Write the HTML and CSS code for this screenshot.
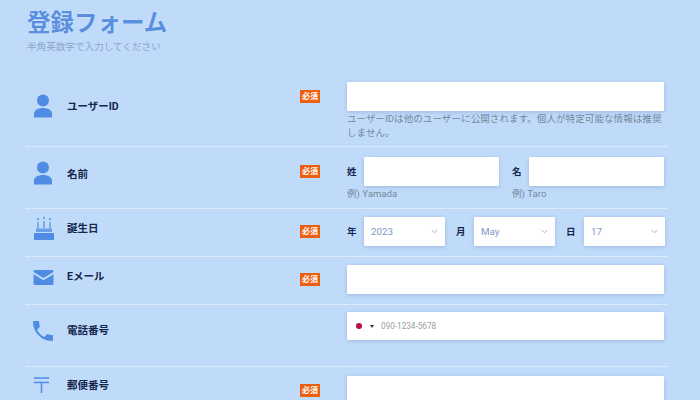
FILE: index.html
```html
<!DOCTYPE html>
<html lang="ja">
<head>
<meta charset="utf-8">
<title>登録フォーム</title>
<link rel="stylesheet" href="styles.css">
</head>
<body>
<main class="page">
  <header class="head">
    <h1 class="title">登録フォーム</h1>
    <p class="sub">半角英数字で入力してください</p>
  </header>
  <div class="row row-first">
    <svg class="icon icon-person" width="20" height="24" viewBox="0 0 20 24"><circle cx="10" cy="6.500" r="6" fill="#4f8ce3"/><path d="M1 23.500v-3.500C1 16 5 14 10 14s9 2 9 6v3.500z" fill="#4f8ce3"/></svg>
    <div class="label">ユーザーID</div>
    <span class="badge">必須</span>
    <div class="field">
      <input class="box" type="text">
      <p class="note">ユーザーIDは他のユーザーに公開されます。個人が特定可能な情報は推奨しません。</p>
    </div>
  </div>
  <div class="row row-name">
    <svg class="icon icon-person" width="20" height="24" viewBox="0 0 20 24"><circle cx="10" cy="6.500" r="6" fill="#4f8ce3"/><path d="M1 23.500v-3.500C1 16 5 14 10 14s9 2 9 6v3.500z" fill="#4f8ce3"/></svg>
    <div class="label">名前</div>
    <span class="badge">必須</span>
    <div class="field pair">
      <div class="part">
        <div class="inline"><span class="mini">姓</span><input class="box" type="text"></div>
        <p class="note note-part">例) Yamada</p>
      </div>
      <div class="part">
        <div class="inline"><span class="mini">名</span><input class="box" type="text"></div>
        <p class="note note-part">例) Taro</p>
      </div>
    </div>
  </div>
  <div class="row row-date">
    <svg class="icon" width="22" height="26" viewBox="0 0 22 26"><path d="M1 25v-7h20v7z" fill="#4f8ce3"/><path d="M3 17v-3.500h16V17z" fill="#6c9fe8"/><path d="M5 13.500V7M11 13.500V6M17 13.500V7" stroke="#5a93e5" stroke-width="1.300"/><path d="M5 2.500l1.200 2.500H3.800zM11 1l1.200 2.800H9.800zM17 2.500l1.200 2.500h-2.400z" fill="#4f8ce3"/></svg>
    <div class="label">誕生日</div>
    <span class="badge">必須</span>
    <div class="field dates">
      <span class="mini">年</span>
      <div class="box pick"><span>2023</span><svg width="7" height="5" viewBox="0 0 7 5"><path d="M.7 1l2.800 2.800L6.300 1" fill="none" stroke="#a9b4c2" stroke-width="1"/></svg></div>
      <span class="mini">月</span>
      <div class="box pick"><span>May</span><svg width="7" height="5" viewBox="0 0 7 5"><path d="M.7 1l2.800 2.800L6.300 1" fill="none" stroke="#a9b4c2" stroke-width="1"/></svg></div>
      <span class="mini">日</span>
      <div class="box pick"><span>17</span><svg width="7" height="5" viewBox="0 0 7 5"><path d="M.7 1l2.800 2.800L6.300 1" fill="none" stroke="#a9b4c2" stroke-width="1"/></svg></div>
    </div>
  </div>
  <div class="row row-mail">
    <svg class="icon" width="21" height="15" viewBox="0 0 21 15"><path d="M.5 1.500A1.500 1.500 0 0 1 2 0h17a1.500 1.500 0 0 1 1.500 1.500v.6L10.500 8 .5 2.100z" fill="#4f8ce3"/><path d="M.5 4.300l10 5.900 10-5.900v9.200A1.500 1.500 0 0 1 19 15H2a1.500 1.500 0 0 1-1.500-1.500z" fill="#4f8ce3"/></svg>
    <div class="label">Eメール</div>
    <span class="badge">必須</span>
    <div class="field"><input class="box" type="text"></div>
  </div>
  <div class="row row-phone">
    <svg class="icon" width="20" height="20" viewBox="3 3 18 18"><path d="M6.620 10.790c1.440 2.830 3.760 5.140 6.590 6.590l2.200-2.200c.27-.27.670-.36 1.020-.24 1.120.37 2.330.57 3.570.57.550 0 1 .45 1 1V20c0 .55-.45 1-1 1C10.610 21 3 13.390 3 4c0-.55.450-1 1-1h3.500c.55 0 1 .45 1 1 0 1.250.2 2.450.57 3.570.11.350.03.740-.25 1.020l-2.200 2.200z" fill="#4f8ce3"/></svg>
    <div class="label">電話番号</div>
    <span></span>
    <div class="field">
      <div class="box tel">
        <span class="flag"></span>
        <span class="caret"></span>
        <span class="hint">090-1234-5678</span>
      </div>
    </div>
  </div>
  <div class="row row-last">
    <svg class="icon icon-post" width="15" height="16" viewBox="0 0 15 16"><path d="M0 1h15M0 5.500h15M7.500 5.500V16" fill="none" stroke="#4f8ce3" stroke-width="1.500"/></svg>
    <div class="label">郵便番号</div>
    <span class="badge">必須</span>
    <div class="field"><input class="box" type="text"></div>
  </div>
</main>
</body>
</html>
```

FILE: styles.css
```css
* { box-sizing: border-box; }
html, body { margin: 0; height: 400px; overflow: hidden; }
body {
  background: #c0dbfa;
  font-family: Roboto, "Noto Sans CJK JP", sans-serif;
  color: #14264d;
}
.page { padding: 8px 33px 0 26px; height: 400px; overflow: hidden; }
.head { height: 66px; padding-left: 1px; }
.title {
  margin: 0;
  font-size: 23.500px;
  line-height: 30px;
  font-weight: 700;
  color: #5a8fe0;
  text-shadow: 0 0 2px rgba(255,255,255,.35);
}
.sub {
  margin: 2px 0 0;
  font-size: 9.600px;
  line-height: 14px;
  color: #8ba4cc;
}
.row {
  display: grid;
  grid-template-columns: 41px 233px 47px 317px;
  padding: 8px 3px 10px 0;
  border-bottom: 1px dotted rgba(255,255,255,.85);
}
.row-name { padding-top: 10px; padding-bottom: 7px; }
.row-first { padding-bottom: 6px; }
.row-phone .field { padding-bottom: 16px; }
.row-phone { padding-top: 7px; }
.row-last { border-bottom: 0; padding-top: 9px; }
.icon {
  align-self: center;
  justify-self: start;
  margin: -7px 0 0 7px;
  display: block;
}
.row-mail .icon { margin-top: -5px; }
.row-first .icon { margin-top: -11px; }
.row-name .icon { margin-top: -12px; }
.row-last .icon { margin-top: -11px; margin-left: 8px; }
.label {
  align-self: center;
  margin-top: -6px;
  font-size: 10.500px;
  line-height: 14px;
  font-weight: 700;
}
.row-first .label, .row-name .label, .row-last .label { margin-top: -9px; }
.row-phone .label { margin-top: -7px; }
.badge {
  align-self: start;
  margin-top: 8px;
  width: 20px;
  height: 13px;
  background: #ec5f10;
  color: #fff;
  font-size: 8px;
  line-height: 13px;
  font-weight: 700;
  text-align: center;
}
.field { min-width: 0; }
.box {
  display: block;
  width: 100%;
  height: 29px;
  border: 0;
  border-radius: 1px;
  background: #fff;
  box-shadow: 0 1px 4px rgba(72,100,150,.3);
  padding: 0;
}
.note {
  margin: 1px 0 0;
  font-size: 9.600px;
  line-height: 14px;
  color: #75879c;
}
.pair { display: grid; grid-template-columns: 152px 152px; column-gap: 13px; }
.inline { display: flex; align-items: center; }
.mini {
  flex: none;
  width: 17px;
  font-size: 9.500px;
  line-height: 14px;
  font-weight: 700;
}
.dates { display: flex; align-items: center; }
.dates .mini:nth-of-type(n+2) { width: 18px; margin-left: 11px; }
.pick {
  flex: none;
  width: 81px;
  display: flex;
  align-items: center;
  justify-content: space-between;
  padding: 0 7px 1px 7px;
  font-size: 9.800px;
  color: #7f97c6;
}
.tel {
  display: flex;
  align-items: center;
  height: 28px;
  padding: 0 0 0 9px;
}
.flag {
  width: 6px;
  height: 6px;
  border-radius: 50%;
  background: #bc0a3c;
}
.caret {
  margin-left: 8px;
  border-left: 2.500px solid transparent;
  border-right: 2.500px solid transparent;
  border-top: 3px solid #333;
}
.hint {
  margin-left: 7px;
  font-size: 8.200px;
  color: #9a9fa6;
}
```
